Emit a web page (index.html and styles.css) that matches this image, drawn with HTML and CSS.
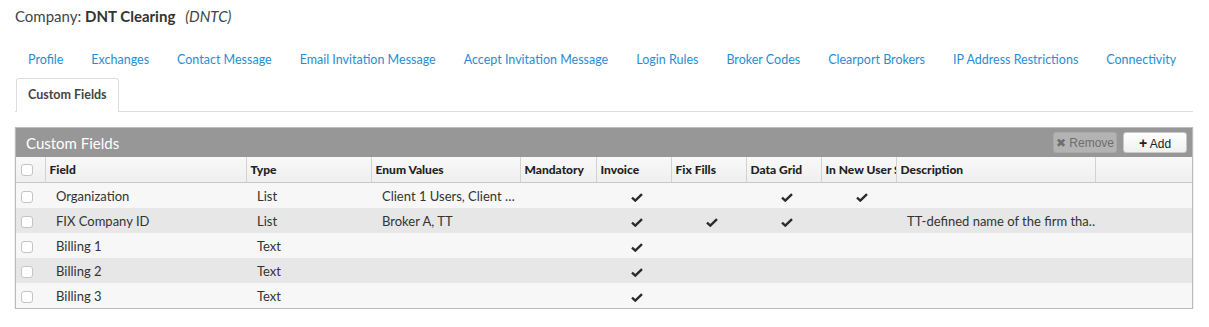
FILE: index.html
```html
<!DOCTYPE html>
<html lang="en">
<head>
  <meta charset="UTF-8" />
  <title>Company - Custom Fields</title>
  <link rel="stylesheet" href="styles.css">
</head>
<body>
  <div class="company">Company: <strong>DNT Clearing</strong> <em>(DNTC)</em></div>

  <ul class="tabs">
    <li><a href="#">Profile</a></li>
    <li><a href="#">Exchanges</a></li>
    <li><a href="#">Contact Message</a></li>
    <li><a href="#">Email Invitation Message</a></li>
    <li><a href="#">Accept Invitation Message</a></li>
    <li><a href="#">Login Rules</a></li>
    <li><a href="#">Broker Codes</a></li>
    <li><a href="#">Clearport Brokers</a></li>
    <li><a href="#">IP Address Restrictions</a></li>
    <li><a href="#">Connectivity</a></li>
    <li class="break"></li>
    <li class="active"><a href="#">Custom Fields</a></li>
  </ul>

  <div class="panel">
    <div class="panel-title">
      <span>Custom Fields</span>
      <div class="actions">
        <button class="btn btn-disabled">&#10006; Remove</button>
        <button class="btn"><b>+</b> Add</button>
      </div>
    </div>

    <table class="grid">
      <colgroup>
        <col style="width:29px"><col style="width:201px"><col style="width:125px"><col style="width:149px">
        <col style="width:76px"><col style="width:75px"><col style="width:75px"><col style="width:75px">
        <col style="width:75px"><col style="width:199px"><col>
      </colgroup>
      <thead>
        <tr>
          <th class="cb"><span class="box"></span></th>
          <th>Field</th>
          <th>Type</th>
          <th>Enum Values</th>
          <th>Mandatory</th>
          <th>Invoice</th>
          <th>Fix Fills</th>
          <th>Data Grid</th>
          <th>In New User Setup</th>
          <th>Description</th>
          <th></th>
        </tr>
      </thead>
      <tbody id="rows"></tbody>
    </table>
  </div>

  <script>
    const rows = [
      { field: "Organization", type: "List", enums: "Client 1 Users, Client …", flags: [0, 1, 0, 1, 1], desc: "" },
      { field: "FIX Company ID", type: "List", enums: "Broker A, TT", flags: [0, 1, 1, 1, 0], desc: "TT-defined name of the firm tha…" },
      { field: "Billing 1", type: "Text", enums: "", flags: [0, 1, 0, 0, 0], desc: "" },
      { field: "Billing 2", type: "Text", enums: "", flags: [0, 1, 0, 0, 0], desc: "" },
      { field: "Billing 3", type: "Text", enums: "", flags: [0, 1, 0, 0, 0], desc: "" }
    ];

    const check = '<svg class="check" width="12" height="9" viewBox="0 0 12 9"><path d="M1 4.6 L4.3 7.6 L11 1.2" fill="none" stroke="#2b2b2b" stroke-width="2.4"/></svg>';

    const tbody = document.getElementById("rows");
    rows.forEach((r) => {
      const tr = document.createElement("tr");
      let html = '<td class="cb"><span class="box"></span></td>';
      html += `<td>${r.field}</td><td>${r.type}</td><td>${r.enums}</td>`;
      r.flags.forEach(f => { html += `<td class="flag">${f ? check : ""}</td>`; });
      html += `<td>${r.desc}</td><td></td>`;
      tr.innerHTML = html;
      tbody.appendChild(tr);
    });
  </script>
</body>
</html>
```

FILE: styles.css
```css
body {
  margin: 0;
  padding: 0 16px 0 15px;
  font-family: Lato, "Open Sans", sans-serif;
  color: #333;
  background: #fff;
}

.company {
  font-size: 15px;
  line-height: 20px;
  padding-top: 6px;
  height: 26px;
  color: #444;
}

.company strong {
  font-weight: bold;
  color: #333;
  margin-right: 6px;
}

.tabs {
  list-style: none;
  margin: 10px 0 0;
  padding: 0 0 0 1px;
  display: flex;
  flex-wrap: wrap;
  border-bottom: 1px solid #ddd;
}

.tabs li {
  margin-right: 4px;
  white-space: nowrap;
}

.tabs li.break {
  flex-basis: 100%;
  height: 0;
  margin: 0;
}

.tabs a {
  display: block;
  padding: 0 11px;
  height: 34px;
  line-height: 34px;
  font-size: 12.5px;
  color: #2a8dd4;
  text-decoration: none;
  border: 1px solid transparent;
  border-bottom: none;
  border-radius: 3px 3px 0 0;
}

.tabs li.active {
  margin-top: 1px;
  margin-bottom: -1px;
}

.tabs li.active a {
  color: #444;
  font-weight: bold;
  background: #fff;
  border-color: #ddd;
  height: 33px;
  line-height: 32px;
}

.panel {
  margin-top: 15px;
  border: 1px solid #bbb;
  box-shadow: 0 1px 2px rgba(0, 0, 0, 0.15);
}

.panel-title {
  display: flex;
  align-items: center;
  justify-content: space-between;
  background: #979797;
  color: #fff;
  height: 29px;
  padding: 0 5px 0 10px;
  font-size: 15px;
}

.actions {
  display: flex;
  gap: 6px;
}

.btn {
  font-family: "Liberation Sans", Arial, sans-serif;
  font-size: 12px;
  width: 64px;
  height: 21px;
  border: 1px solid #c8c8c8;
  border-radius: 3px;
  background: linear-gradient(#ffffff, #f0f0f0);
  color: #222;
  padding: 0;
}

.btn b {
  font-size: 14px;
}

.btn-disabled {
  background: #b3b3b3;
  border-color: #a8a8a8;
  color: #6e6e6e;
}

.grid {
  width: 100%;
  border-collapse: collapse;
  table-layout: fixed;
  font-size: 13px;
}

.grid th {
  background: linear-gradient(#f8f8f8, #efefef);
  height: 25px;
  border-right: 1px solid #d2d2d2;
  border-bottom: 1px solid #c8c8c8;
  text-align: left;
  font-size: 12px;
  font-weight: 900;
  color: #222;
  padding: 0 0 0 4px;
  white-space: nowrap;
  overflow: hidden;
}

.grid th:last-child {
  border-right: none;
}

.grid td {
  height: 25px;
  padding: 0 0 0 11px;
  line-height: 16px;
  white-space: nowrap;
  overflow: hidden;
  color: #333;
}

.grid tbody tr:nth-child(odd) {
  background: #f7f7f7;
}

.grid tbody tr:nth-child(even) {
  background: #e7e7e7;
}

.grid .cb {
  padding: 0 0 0 5px;
}

.grid td.flag {
  text-align: center;
  padding: 0 0 0 7px;
}

.check {
  display: inline-block;
  vertical-align: middle;
}

.box {
  display: block;
  width: 10px;
  height: 10px;
  border: 1px solid #c4c4c4;
  border-radius: 3px;
  background: #fff;
}

.grid td .box {
  margin-top: 2px;
}
```
